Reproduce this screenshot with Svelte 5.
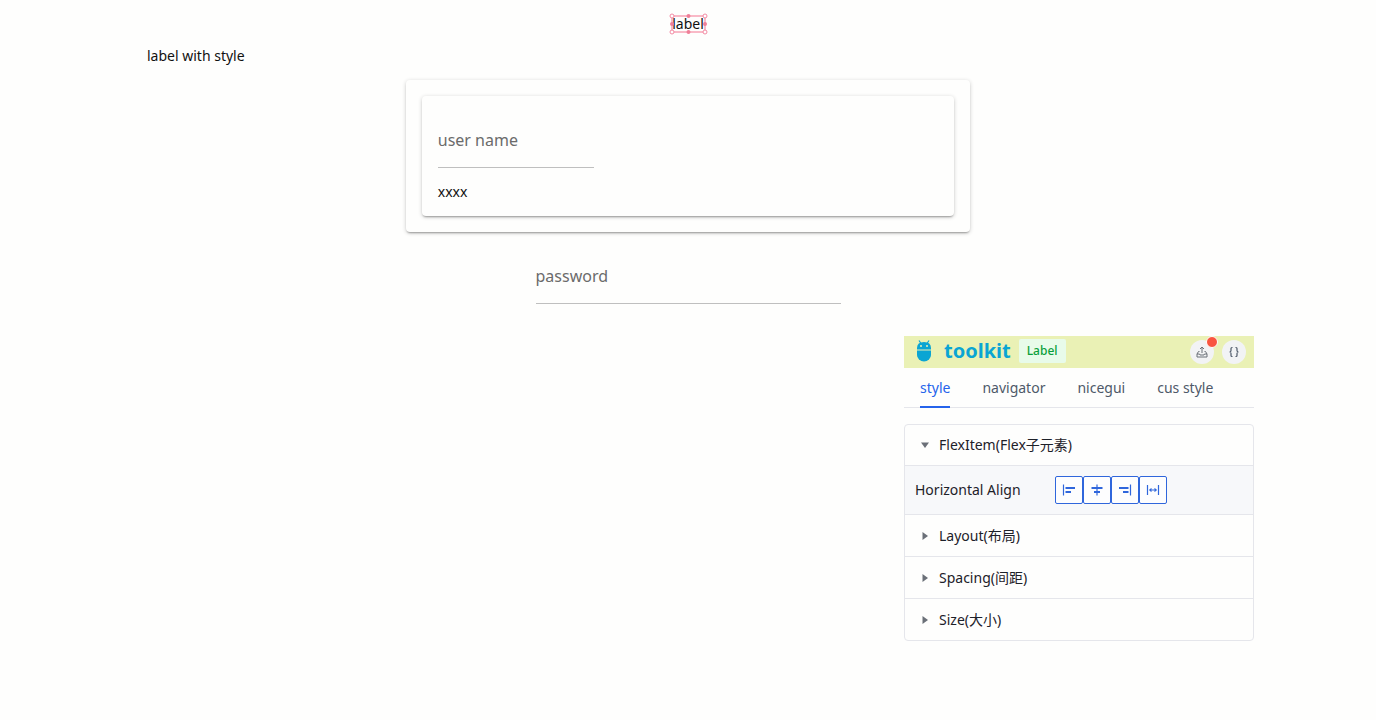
<script>
  let userName = $state('');
  let password = $state('');
  let activeTab = $state('style');
  let open = $state('flex');

  const tabs = ['style', 'navigator', 'nicegui', 'cus style'];
  const sections = [
    { id: 'flex', title: 'FlexItem(Flex子元素)' },
    { id: 'layout', title: 'Layout(布局)' },
    { id: 'spacing', title: 'Spacing(间距)' },
    { id: 'size', title: 'Size(大小)' }
  ];
  const alignments = [
    { name: 'Start', thin: 'M1.5 1.5v11', bars: 'M3.5 5h9.500M3.500 9h5.500' },
    { name: 'Center', thin: 'M7 1.5v11', bars: 'M1.500 5h11M4 9h6' },
    { name: 'End', thin: 'M12.5 1.5v11', bars: 'M1 5h9.500M5 9h5.500' },
    { name: 'Stretch', thin: 'M1.5 2v10M12.5 2v10M3.5 7h7', bars: 'M5.500 5.500L4 7l1.500 1.500M8.500 5.500L10 7l-1.500 1.500' }
  ];
</script>

<main class="page">
  <div class="selected">
    <span>label</span>
    <svg class="handles" viewBox="0 0 40 22" aria-hidden="true">
      <rect x="4" y="3" width="33" height="16" fill="none" stroke="#f7a3b5" stroke-width="1.500" />
      <g fill="#ef7f98">
        <circle cx="20.500" cy="3" r="2" />
        <circle cx="20.500" cy="19" r="2" />
        <circle cx="4" cy="11" r="2" />
        <circle cx="37" cy="11" r="2" />
      </g>
      <g fill="#fff" stroke="#f38ba3">
        <circle cx="4" cy="3" r="2" />
        <circle cx="37" cy="3" r="2" />
        <circle cx="4" cy="19" r="2" />
        <circle cx="37" cy="19" r="2" />
      </g>
    </svg>
  </div>

  <div class="styled">label with style</div>

  <div class="card outer">
    <div class="card inner">
      <div class="field short">
        <label for="user" class:filled={userName}>user name</label>
        <input id="user" bind:value={userName} />
      </div>
      <div>xxxx</div>
    </div>
  </div>

  <div class="field long">
    <label for="pass" class:filled={password}>password</label>
    <input id="pass" type="password" bind:value={password} />
  </div>

  <aside class="toolkit">
    <header>
      <svg class="robot" viewBox="0 0 16 22" fill="#0aa5d3" aria-hidden="true">
        <path d="M3 .5l2 3M13 .5l-2 3" stroke="#0aa5d3" stroke-width="1.200" />
        <path d="M1 9.500V8q0-6 7-6t7 6v1.500z" />
        <path d="M1 10.500h14v4.500a7 6.500 0 0 1-14 0z" />
        <circle cx="5" cy="6" r="1" fill="#eaf1b5" />
        <circle cx="11" cy="6" r="1" fill="#eaf1b5" />
      </svg>
      <h1>toolkit</h1>
      <span class="tag">Label</span>
      <div class="actions">
        <button class="round" aria-label="Export">
          <svg viewBox="0 0 12 12" width="12" height="12" fill="none" stroke="#6b7078">
            <path d="M6 7V1M4 3l2-2 2 2M3.500 5.500H2.500L1 8v3h10V8L9.500 5.500h-1M1 8h2.500l.5 1h4l.5-1H11" />
          </svg>
          <span class="dot"></span>
        </button>
        <button class="round" aria-label="Code">
          <svg viewBox="0 0 12 12" width="12" height="12" fill="none" stroke="#4e5969" stroke-width="1.200">
            <path d="M4.500 1.500H4q-1 0-1 1v2Q3 6 1.500 6 3 6 3 7.500v2q0 1 1 1h.5M7.500 1.500H8q1 0 1 1v2Q9 6 10.500 6 9 6 9 7.500v2q0 1-1 1h-.5" />
          </svg>
        </button>
      </div>
    </header>

    <nav>
      {#each tabs as tab}
        <button class:active={activeTab === tab} onclick={() => (activeTab = tab)}>{tab}</button>
      {/each}
    </nav>

    <div class="accordion">
      {#each sections as section}
        <section>
          <button
            class="title"
            aria-expanded={open === section.id}
            onclick={() => (open = open === section.id ? '' : section.id)}
          >
            <svg class:down={open === section.id} viewBox="0 0 10 10" width="10" height="10" fill="#6b7078" aria-hidden="true">
              <path d="M2.500 1v8L8 5z" />
            </svg>
            {section.title}
          </button>
          {#if section.id === 'flex' && open === 'flex'}
            <div class="content">
              <span class="name">Horizontal Align</span>
              <div class="group">
                {#each alignments as item}
                  <button aria-label={item.name}>
                    <svg viewBox="0 0 14 14" width="14" height="14" fill="none" stroke="#2f66dc">
                      <path d={item.thin} stroke-width="1.200" />
                      <path d={item.bars} stroke-width={item.name === 'Stretch' ? 1.2 : 2} />
                    </svg>
                  </button>
                {/each}
              </div>
            </div>
          {/if}
        </section>
      {/each}
    </div>
  </aside>
</main>

<style>
  :global(body) {
    margin: 0;
    background: #fefefd;
  }
  .page,
  button,
  input {
    font-family: 'Noto Sans', 'Noto Sans CJK SC', sans-serif;
    font-size: 14px;
  }
  .page {
    box-sizing: border-box;
    display: flex;
    flex-direction: column;
    align-items: center;
    gap: 16px;
    padding: 16px;
    line-height: 16px;
    color: #111;
  }
  button {
    box-sizing: border-box;
    margin: 0;
    padding: 0;
    border: 0;
    background: none;
    color: inherit;
    cursor: pointer;
  }
  .selected {
    position: relative;
  }
  .handles {
    position: absolute;
    inset: -3px auto auto 50%;
    width: 40px;
    height: 22px;
    margin-left: -20px;
  }
  .styled {
    width: 90%;
    max-width: 1082px;
  }
  .card {
    box-sizing: border-box;
    display: flex;
    flex-direction: column;
    gap: 16px;
    padding: 16px;
    border-radius: 4px;
    box-shadow: 0 1px 4px rgba(0, 0, 0, 0.2), 0 2px 2px -1px rgba(0, 0, 0, 0.3);
  }
  .outer {
    width: 42%;
  }
  .field {
    display: grid;
    height: 56px;
    box-sizing: border-box;
    border-bottom: 1px solid #bfbfbf;
  }
  .field label,
  .field input {
    grid-area: 1 / 1;
  }
  .field label {
    align-self: center;
    font-size: 16px;
    line-height: 24px;
    color: #6b6b6b;
    pointer-events: none;
  }
  .field label.filled {
    align-self: start;
    font-size: 12px;
  }
  .field input {
    min-width: 0;
    padding: 24px 0 8px;
    border: 0;
    outline: 0;
    background: transparent;
  }
  .short {
    width: 156px;
  }
  .long {
    width: 305px;
  }
  .toolkit {
    align-self: flex-end;
    width: 350px;
    margin: 16px 106px 0 0;
    color: #1d2129;
  }
  header {
    display: flex;
    align-items: center;
    height: 32px;
    padding: 0 8px 0 12px;
    background: #eaf1b5;
  }
  .robot {
    width: 16px;
    height: 22px;
    margin-bottom: 2px;
  }
  h1 {
    margin: 0 8px 2px 12px;
    font-size: 20px;
    line-height: 24px;
    color: #0aa5d3;
  }
  .tag {
    padding: 0 8px;
    margin-bottom: 2px;
    border-radius: 2px;
    background: #e8fbea;
    color: #0a9f3b;
    font-size: 12px;
    font-weight: 500;
    line-height: 24px;
  }
  .actions {
    display: flex;
    gap: 8px;
    margin-left: auto;
  }
  .round {
    position: relative;
    display: grid;
    place-items: center;
    width: 24px;
    height: 24px;
    border-radius: 50%;
    background: #f2f3f5;
  }
  .dot {
    position: absolute;
    top: -4px;
    right: -4px;
    width: 10px;
    height: 10px;
    border: 1px solid #fff;
    border-radius: 50%;
    background: #f9553f;
  }
  nav {
    display: flex;
    gap: 32px;
    height: 40px;
    box-sizing: border-box;
    padding: 0 16px;
    border-bottom: 1px solid #e5e6eb;
  }
  nav button {
    height: 40px;
    border-bottom: 2px solid transparent;
    color: #4e5969;
    white-space: nowrap;
  }
  nav .active {
    border-color: #2563eb;
    color: #2563eb;
  }
  .accordion {
    margin-top: 16px;
    border: 1px solid #e5e6eb;
    border-radius: 4px;
  }
  section + section {
    border-top: 1px solid #e5e6eb;
  }
  .title {
    display: flex;
    align-items: center;
    gap: 9px;
    width: 100%;
    height: 41px;
    padding: 0 15px;
    line-height: 24px;
  }
  section:first-child .title {
    height: 40px;
  }
  .title svg.down {
    transform: rotate(90deg);
  }
  .content {
    display: flex;
    align-items: center;
    box-sizing: border-box;
    height: 49px;
    padding: 0 10px;
    border-top: 1px solid #e5e6eb;
    background: #f7f8fa;
  }
  .name {
    width: 140px;
  }
  .group {
    display: flex;
  }
  .group button {
    display: grid;
    place-items: center;
    width: 28px;
    height: 28px;
    border: 1px solid #2f66dc;
    border-radius: 2px;
    background: #fdfdfe;
  }
</style>
